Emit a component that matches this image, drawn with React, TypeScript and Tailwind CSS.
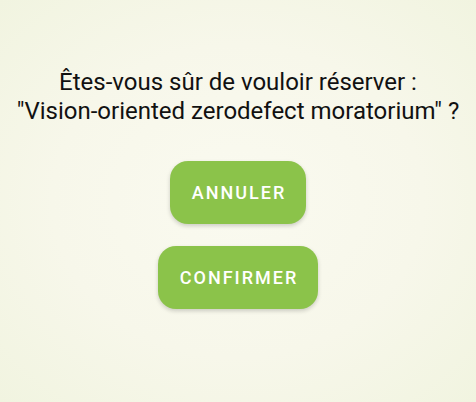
export default function App() {
  return (
    <div
      className="w-[476px] h-[402px] flex flex-col items-center bg-[radial-gradient(ellipse_at_center,#fafaf0_0%,#f7f7ea_55%,#f1f4e0_100%)] text-black"
      style={{ fontFamily: "Roboto, 'Liberation Sans', sans-serif" }}
    >
      <p className="mt-[68px] text-center text-[24px] leading-[29px] text-[#111] whitespace-nowrap">
        Êtes-vous sûr de vouloir réserver :
        <br />
        "Vision-oriented zerodefect moratorium" ?
      </p>

      {/* Actions */}
      <div className="mt-[35px] flex flex-col items-center gap-[22px]">
        <button className="h-[63px] pl-[22px] pr-[20px] rounded-[18px] bg-[#8bc34a] text-white text-[18px] font-medium tracking-[2px] shadow-[0_2px_4px_rgba(0,0,0,0.18)]">
          ANNULER
        </button>
        <button className="h-[63px] pl-[22px] pr-[20px] rounded-[18px] bg-[#8bc34a] text-white text-[18px] font-medium tracking-[2px] shadow-[0_2px_4px_rgba(0,0,0,0.18)]">
          CONFIRMER
        </button>
      </div>
    </div>
  );
}
